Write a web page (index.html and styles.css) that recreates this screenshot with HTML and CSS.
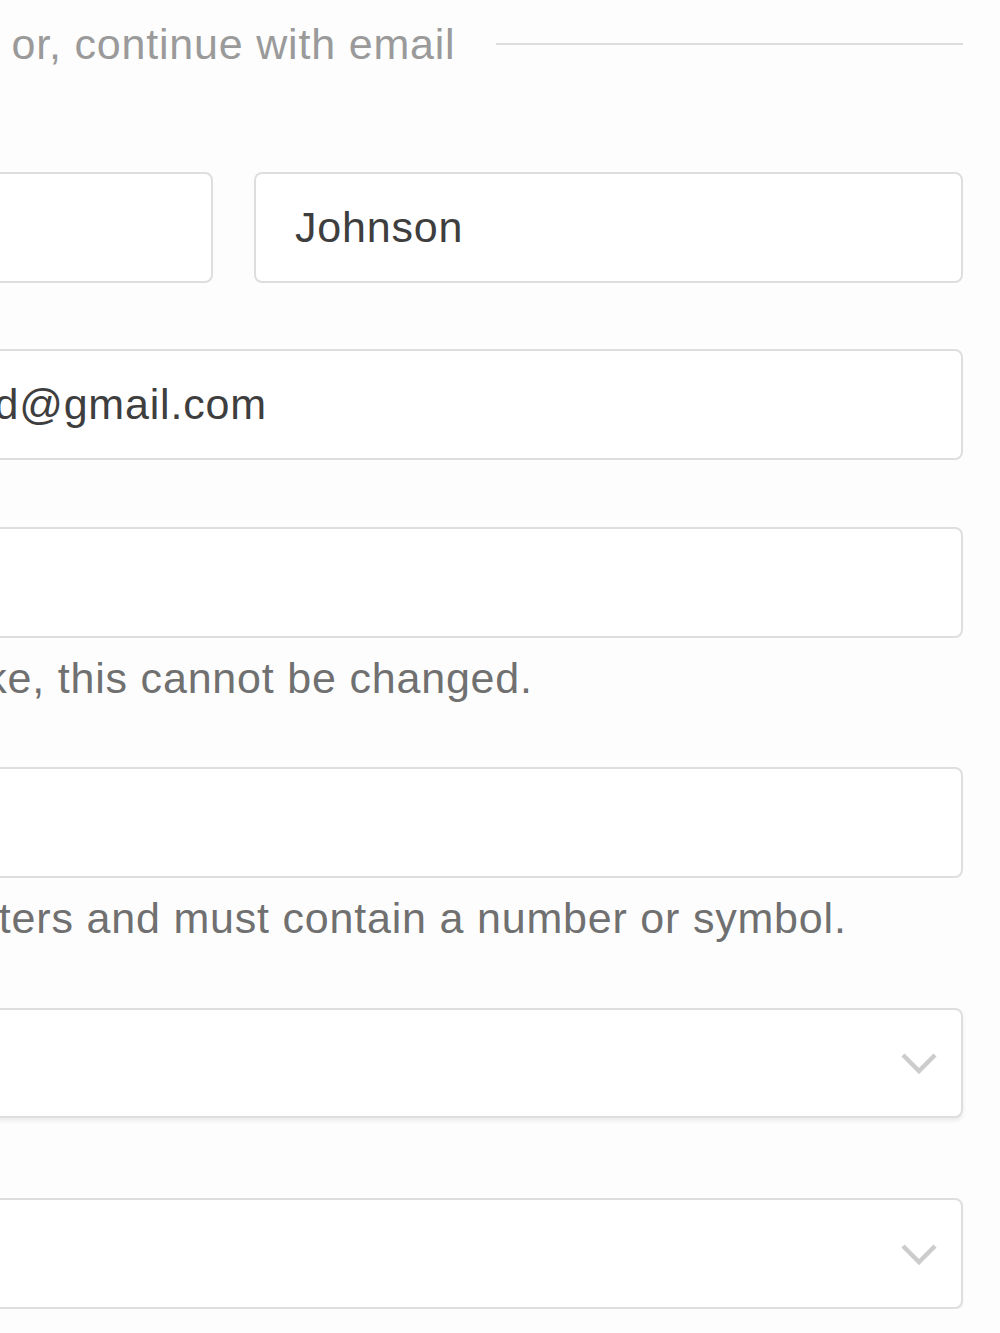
FILE: index.html
```html
<!DOCTYPE html>
<html lang="en">
<head>
<meta charset="utf-8">
<title>Register</title>
<link rel="stylesheet" href="styles.css">
</head>
<body>
<main class="page">
  <form class="signup">
    <div class="divider">
      <span class="rule"></span>
      <span class="divider-text">or, continue with email</span>
      <span class="rule"></span>
    </div>

    <div class="name-row">
      <div class="field-box"><span class="value">Rachael</span></div>
      <div class="field-box"><span class="value">Johnson</span></div>
    </div>

    <div class="field-box email"><span class="value">rachael.johnson.howard@gmail.com</span></div>

    <div class="field-box username"><span class="value"></span></div>
    <p class="help">Pick a username you’ll like, this cannot be changed.</p>

    <div class="field-box password"><span class="value"></span></div>
    <p class="help">Choose at least 6 characters and must contain a number or symbol.</p>

    <div class="field-box select select-first">
      <span class="value"></span>
      <svg class="chevron" width="36" height="24" viewBox="0 0 36 24" aria-hidden="true">
        <polyline points="2,4 18,20 34,4" fill="none" stroke="#cccccc" stroke-width="4.5"/>
      </svg>
    </div>

    <div class="field-box select select-second">
      <span class="value"></span>
      <svg class="chevron" width="36" height="24" viewBox="0 0 36 24" aria-hidden="true">
        <polyline points="2,4 18,20 34,4" fill="none" stroke="#cccccc" stroke-width="4.5"/>
      </svg>
    </div>
  </form>
</main>
</body>
</html>
```

FILE: styles.css
```css
html, body {
  margin: 0;
  padding: 0;
}

body {
  background: #fdfdfd;
  font-family: "Liberation Sans", Arial, sans-serif;
  overflow: hidden;
}

.signup {
  width: 1459px;
  margin-left: -496px;
  padding-top: 14px;
}

.divider {
  display: flex;
  align-items: center;
  gap: 41px;
  height: 60px;
}

.rule {
  flex: 1;
  height: 2px;
  background: #dcdcdc;
}

.divider-text {
  font-size: 43px;
  letter-spacing: 0.8px;
  color: #9a9a9a;
  white-space: nowrap;
}

.name-row {
  display: grid;
  grid-template-columns: 1fr 1fr;
  gap: 41px;
  margin-top: 98px;
}

.field-box {
  height: 111px;
  box-sizing: border-box;
  border: 2px solid #dedede;
  border-radius: 8px;
  background: #fff;
  display: flex;
  align-items: center;
  padding: 0 24px 0 39px;
  font-size: 43px;
  letter-spacing: 0.8px;
  color: #3e3e3e;
  white-space: nowrap;
  overflow: hidden;
}

.email {
  margin-top: 66px;
}

.username {
  margin-top: 67px;
}

.password {
  margin-top: 61px;
}

.help {
  margin: 12px 0 0;
  font-size: 43px;
  line-height: 56px;
  letter-spacing: 0.8px;
  color: #707070;
  white-space: nowrap;
}

.select {
  justify-content: space-between;
  box-shadow: 0 3px 4px rgba(0, 0, 0, 0.07);
}

.select-first {
  margin-top: 62px;
  height: 110px;
}

.select-second {
  margin-top: 80px;
  box-shadow: 0 2px 3px rgba(0, 0, 0, 0.04);
}

.chevron {
  flex: none;
  display: block;
}
```
